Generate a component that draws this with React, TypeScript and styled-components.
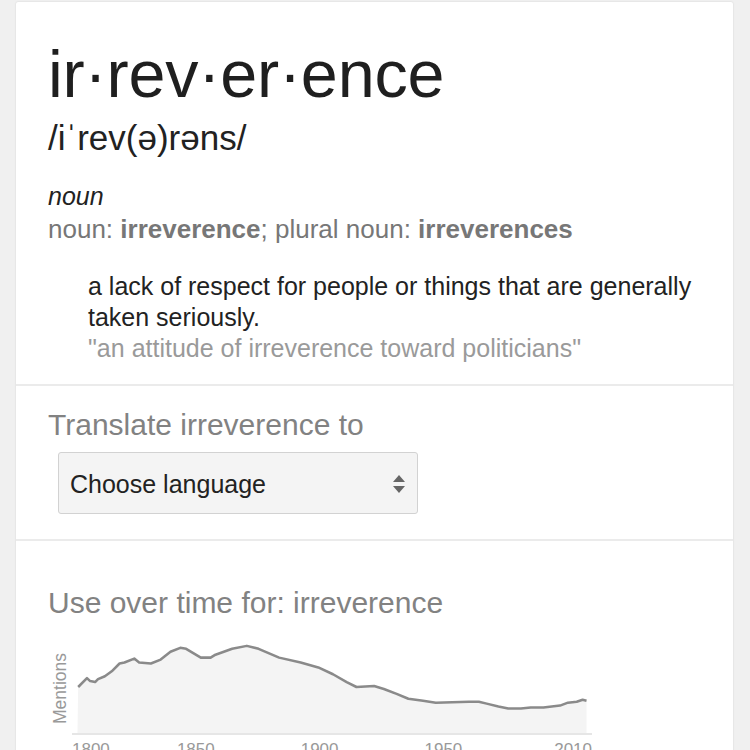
import React from "react";
import styled, { createGlobalStyle } from "styled-components";

const Global = createGlobalStyle`
  html, body { margin: 0; padding: 0; background: #f0f0f0; }
  body { font-family: "Liberation Sans", Arial, Helvetica, sans-serif; overflow: hidden; }
  * { box-sizing: border-box; }
`;

const Page = styled.div`
  width: 750px;
  height: 750px;
  overflow: hidden;
  padding: 2px 17px 0 16px;
`;

const Card = styled.div`
  background: #fff;
  border-radius: 2px 2px 0 0;
  box-shadow: 0 0 2px rgba(0, 0, 0, 0.14);
  height: 820px;
`;

const Section = styled.section<{ $pt: number; $pb: number }>`
  padding: ${(p) => p.$pt}px 32px ${(p) => p.$pb}px;
  & + & {
    border-top: 2px solid #ebebeb;
  }
`;

const Headword = styled.h1`
  margin: 0;
  font-size: 66.5px;
  line-height: 66px;
  font-weight: 400;
  color: #1f1f1f;
  letter-spacing: -0.2px;
`;

const Pron = styled.div`
  margin-top: 11px;
  font-size: 35px;
  line-height: 40px;
  color: #222;
`;

const PosBlock = styled.div`
  margin-top: 22px;
  font-size: 25px;
  line-height: 33px;
`;

const Pos = styled.div`
  font-style: italic;
  color: #222;
`;

const Forms = styled.div`
  color: #777;
  font-size: 26px;
  b {
    font-weight: 700;
    color: #777;
  }
`;

const Definition = styled.div`
  margin-top: 25px;
  padding-left: 40px;
  font-size: 25px;
  line-height: 31px;
  color: #222;
`;

const Example = styled.div`
  color: #9a9a9a;
`;

const Title = styled.h2`
  margin: 0;
  font-size: 30px;
  line-height: 36px;
  font-weight: 400;
  color: #828282;
`;

const Select = styled.div`
  margin: 9px 0 0 10px;
  width: 360px;
  height: 62px;
  border: 1px solid #d2d2d2;
  border-radius: 3px;
  background: #f4f4f4;
  display: flex;
  align-items: center;
  justify-content: space-between;
  padding: 2px 12px 0 11px;
  font-size: 25px;
  color: #222;
`;

const ChartRow = styled.div`
  margin-top: 19px;
  display: flex;
`;

const YLabel = styled.div`
  width: 24px;
  height: 97px;
  display: flex;
  align-items: center;
  justify-content: center;
  span {
    writing-mode: vertical-rl;
    transform: rotate(180deg);
    font-size: 17.5px;
    line-height: 17px;
    color: #999;
  }
`;

const PlotCol = styled.div`
  width: 520px;
  display: flex;
  flex-direction: column;
`;

const Plot = styled.svg`
  display: block;
  border-bottom: 2px solid #e6e6e6;
`;

const Axis = styled.div`
  position: relative;
  margin-top: 5px;
  height: 22px;
`;

const Year = styled.span`
  position: absolute;
  top: 0;
  font-size: 17px;
  line-height: 20px;
  color: #999;
  white-space: nowrap;
`;

const pts: [number, number][] = [
  [72.7, 688], [81.7, 679], [85, 682], [90, 683], [93, 680], [100, 677], [107, 672],
  [115, 664], [120, 663], [130, 659], [135, 663], [147, 664], [157, 660], [167, 652],
  [177, 648], [183, 649], [198, 658], [208, 658], [213, 655], [230, 649], [245, 646],
  [257, 649], [278, 658], [300, 663], [318, 668], [333, 675], [347, 683], [357, 688],
  [375, 687], [385, 690], [398, 695], [410, 700], [425, 702], [438, 704], [472, 703],
  [482, 703], [490, 705], [502, 708], [512, 710], [525, 710], [535, 709], [548, 709],
  [565, 707], [573, 704], [582, 703], [588, 701], [592, 702],
];

const W = 520;
const H = 95;
const local = pts.map(([x, y]) => [x - 72, y - 640] as [number, number]);
const linePath = local.map(([x, y], i) => `${i ? "L" : "M"}${x.toFixed(1)},${y}`).join(" ");
const areaPath = `${linePath} L${W},${H} L0,${H} Z`;

const years = [1800, 1850, 1900, 1950, 2010];

function yearStyle(y: number, i: number): React.CSSProperties {
  const x = ((y - 1800) / (2010 - 1800)) * W;
  if (i === 0) return { left: 0 };
  if (i === years.length - 1) return { right: 0 };
  return { left: x, transform: "translateX(-50%)" };
}

const Arrows = () => (
  <svg width="12" height="18" viewBox="0 0 12 18">
    <polygon points="0,7 6,0 12,7" fill="#666" />
    <polygon points="0,11 12,11 6,18" fill="#666" />
  </svg>
);

export default function App() {
  return (
    <>
      <Global />
      <Page>
        <Card>
          <Section $pt={39} $pb={20}>
            <Headword>ir·rev·er·ence</Headword>
            <Pron>/iˈrev(ə)rəns/</Pron>
            <PosBlock>
              <Pos>noun</Pos>
              <Forms>
                noun: <b>irreverence</b>; plural noun: <b>irreverences</b>
              </Forms>
            </PosBlock>
            <Definition>
              a lack of respect for people or things that are generally taken seriously.
              <Example>"an attitude of irreverence toward politicians"</Example>
            </Definition>
          </Section>
          <Section $pt={21} $pb={25}>
            <Title>Translate irreverence to</Title>
            <Select>
              <span>Choose language</span>
              <Arrows />
            </Select>
          </Section>
          <Section $pt={44} $pb={0}>
            <Title>Use over time for: irreverence</Title>
            <ChartRow>
              <YLabel>
                <span>Mentions</span>
              </YLabel>
              <PlotCol>
                <Plot width={W} height={H} viewBox={`0 0 ${W} ${H}`}>
                  <path d={areaPath} fill="#f4f4f4" />
                  <path d={linePath} fill="none" stroke="#8a8a8a" strokeWidth={2.6} strokeLinejoin="round" />
                </Plot>
                <Axis>
                  {years.map((y, i) => (
                    <Year key={y} style={yearStyle(y, i)}>
                      {y}
                    </Year>
                  ))}
                </Axis>
              </PlotCol>
            </ChartRow>
          </Section>
        </Card>
      </Page>
    </>
  );
}
